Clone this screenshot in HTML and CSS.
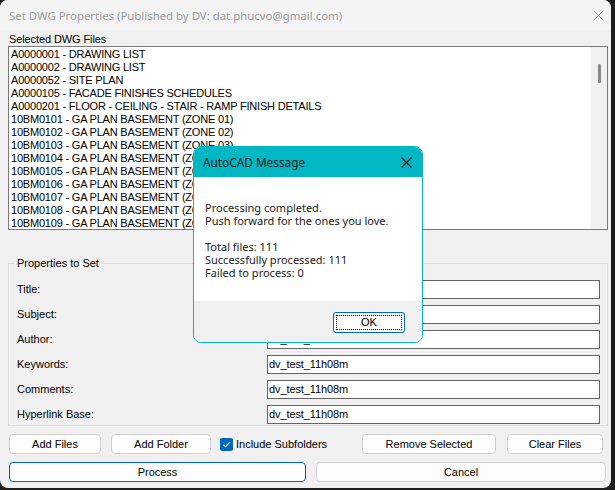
FILE: index.html
```html
<!DOCTYPE html>
<html>
<head>
<meta charset="utf-8">
<link rel="stylesheet" href="styles.css">
</head>
<body>
<div class="window">
  <div class="titlebar">
    <span class="title">Set DWG Properties (Published by DV: dat.phucvo@gmail.com)</span>
    <span class="close">
      <svg width="11" height="11" viewBox="0 0 11 11"><path d="M0.5 0.5 L10.5 10.5 M10.5 0.5 L0.5 10.5" stroke="#9a9a9a" stroke-width="1" fill="none"/></svg>
    </span>
  </div>
  <div class="client">
    <div class="label">Selected DWG Files</div>
    <div class="listbox">
      <div class="items">
        <div class="item">A0000001 - DRAWING LIST</div>
        <div class="item">A0000002 - DRAWING LIST</div>
        <div class="item">A0000052 - SITE PLAN</div>
        <div class="item">A0000105 - FACADE FINISHES SCHEDULES</div>
        <div class="item">A0000201 - FLOOR - CEILING - STAIR - RAMP FINISH DETAILS</div>
        <div class="item">10BM0101 - GA PLAN BASEMENT (ZONE 01)</div>
        <div class="item">10BM0102 - GA PLAN BASEMENT (ZONE 02)</div>
        <div class="item">10BM0103 - GA PLAN BASEMENT (ZONE 03)</div>
        <div class="item">10BM0104 - GA PLAN BASEMENT (ZONE 04)</div>
        <div class="item">10BM0105 - GA PLAN BASEMENT (ZONE 05)</div>
        <div class="item">10BM0106 - GA PLAN BASEMENT (ZONE 06)</div>
        <div class="item">10BM0107 - GA PLAN BASEMENT (ZONE 07)</div>
        <div class="item">10BM0108 - GA PLAN BASEMENT (ZONE 08)</div>
        <div class="item">10BM0109 - GA PLAN BASEMENT (ZONE 09)</div>
      </div>
      <div class="scrollbar"><div class="thumb"></div></div>
    </div>
    <fieldset class="group">
      <legend>Properties to Set</legend>
      <div class="props">
        <div class="plabel">Title:</div><div class="tbox">dv_test_11h08m</div>
        <div class="plabel">Subject:</div><div class="tbox">dv_test_11h08m</div>
        <div class="plabel">Author:</div><div class="tbox">dv_test_11h08m</div>
        <div class="plabel">Keywords:</div><div class="tbox">dv_test_11h08m</div>
        <div class="plabel">Comments:</div><div class="tbox">dv_test_11h08m</div>
        <div class="plabel">Hyperlink Base:</div><div class="tbox">dv_test_11h08m</div>
      </div>
    </fieldset>
    <div class="row row1">
      <div class="btn b-addfiles">Add Files</div>
      <div class="btn b-addfolder">Add Folder</div>
      <div class="check">
        <span class="box"><svg width="13" height="13" viewBox="0 0 13 13"><path d="M3.5 6.8 L5.6 8.8 L9.6 4.4" stroke="#fff" stroke-width="1.1" fill="none"/></svg></span>
        <span class="ctext">Include Subfolders</span>
      </div>
      <div class="btn b-remove">Remove Selected</div>
      <div class="btn b-clear">Clear Files</div>
    </div>
    <div class="row row2">
      <div class="btn b-process">Process</div>
      <div class="btn b-cancel">Cancel</div>
    </div>
  </div>

  <div class="dialog">
    <div class="dtitle">
      <span class="dtext">AutoCAD Message</span>
      <span class="dclose"><svg width="11" height="11" viewBox="0 0 11 11"><path d="M0.5 0.5 L10.5 10.5 M10.5 0.5 L0.5 10.5" stroke="#1a1a1a" stroke-width="1.1" fill="none"/></svg></span>
    </div>
    <div class="dbody">
      <div>Processing completed.</div>
      <div>Push forward for the ones you love.</div>
      <div class="blank"></div>
      <div>Total files: 111</div>
      <div>Successfully processed: 111</div>
      <div>Failed to process: 0</div>
    </div>
    <div class="dfoot">
      <div class="okbtn"><span class="focus">OK</span></div>
    </div>
  </div>
</div>
</body>
</html>
```

FILE: styles.css
```css
html, body {
  margin: 0;
  padding: 0;
  background: #1e1e1e;
}
body {
  width: 615px;
  height: 490px;
  overflow: hidden;
}
.window {
  position: relative;
  width: 611px;
  height: 488px;
  background: #f0f0f0;
  border-radius: 8px;
  overflow: hidden;
  font-family: "Liberation Sans", Arial, sans-serif;
  font-size: 11px;
  color: #000;
}
.titlebar {
  height: 30px;
  background: #f3f3f3;
  display: flex;
  align-items: center;
  padding-left: 9px;
}
.title {
  font-family: "Noto Sans", sans-serif;
  font-size: 11.4px;
  color: #9a9a9a;
  white-space: nowrap;
}
.close {
  margin-left: auto;
  width: 18px;
  height: 30px;
  display: flex;
  align-items: center;
  justify-content: flex-start;
}
.client {
  padding-left: 8px;
}
.label {
  height: 14px;
  line-height: 14px;
  margin-top: 2px;
  padding-left: 1px;
  letter-spacing: -0.1px;
}
.listbox {
  width: 598px;
  height: 182px;
  border: 1px solid #7a7a7a;
  background: #fff;
  display: flex;
  overflow: hidden;
}
.items {
  flex: 1;
  padding-left: 2px;
  padding-top: 1px;
  overflow: hidden;
}
.item {
  height: 13px;
  line-height: 13px;
  white-space: nowrap;
  letter-spacing: -0.2px;
}
.scrollbar {
  width: 16px;
  background: #f0f0f0;
  display: flex;
  justify-content: center;
  padding-top: 17px;
}
.thumb {
  width: 3px;
  height: 19px;
  background: #8a8a8a;
  border-radius: 1px;
  margin-left: 1px;
}
.group {
  margin: 27px 0 0 0;
  width: 583px;
  padding: 10px 7px 1px 8px;
  border: 1px solid #dcdcdc;
  min-width: 0;
}
.group legend {
  padding: 0 2px;
  margin-left: -2px;
  height: 13px;
  line-height: 13px;
}
.props {
  display: grid;
  grid-template-columns: 250px 333px;
  grid-auto-rows: 19px;
  row-gap: 6px;
}
.plabel {
  line-height: 19px;
  white-space: nowrap;
}
.tbox {
  border: 1px solid #646464;
  background: #fff;
  line-height: 17px;
  padding-left: 1px;
  white-space: nowrap;
  overflow: hidden;
  letter-spacing: -0.1px;
}
.row {
  display: flex;
  align-items: center;
  height: 20px;
  margin-top: 8px;
  padding-left: 1px;
}
.btn {
  box-sizing: border-box;
  flex-shrink: 0;
  height: 20px;
  line-height: 18px;
  text-align: center;
  background: #fdfdfd;
  border: 1px solid #d0d0d0;
  border-radius: 4px;
  white-space: nowrap;
}
.b-addfiles { width: 92px; }
.b-addfolder { width: 100px; margin-left: 10px; }
.check {
  display: flex;
  align-items: center;
  margin-left: 9px;
  flex-shrink: 0;
  white-space: nowrap;
  width: 132px;
}
.box {
  width: 13px;
  height: 13px;
  background: #0067c0;
  border-radius: 2px;
  display: flex;
}
.ctext {
  margin-left: 3px;
  font-size: 11px;
}
.b-remove { width: 134px; margin-left: 10px; }
.b-clear { width: 96px; margin-left: 11px; }
.b-process { width: 297px; border-color: #0067c0; }
.b-cancel { width: 290px; margin-left: 10px; }

.dialog {
  position: absolute;
  left: 193px;
  top: 146px;
  width: 228px;
  height: 195px;
  border: 1px solid #00b7c3;
  border-radius: 8px;
  overflow: hidden;
  background: #fff;
  display: flex;
  flex-direction: column;
  font-family: "Noto Sans", sans-serif;
  font-size: 11px;
  color: #1a1a1a;
}
.dtitle {
  height: 30px;
  background: #00b7c3;
  display: flex;
  align-items: center;
  padding-left: 9px;
}
.dtext {
  font-size: 11.8px;
  color: #1a1a1a;
}
.dclose {
  margin-left: auto;
  width: 21px;
  display: flex;
  align-items: center;
}
.dbody {
  height: 100px;
  padding: 24px 0 0 11px;
  line-height: 13px;
  white-space: nowrap;
}
.blank { height: 13px; }
.dfoot {
  flex: 1;
  background: #f0f0f0;
  display: flex;
  justify-content: flex-end;
  align-items: flex-start;
  padding: 11px 17px 0 0;
}
.okbtn {
  box-sizing: border-box;
  width: 72px;
  height: 21px;
  border: 1px solid #0067c0;
  border-radius: 3px;
  background: #fdfdfd;
  padding: 2px;
  display: flex;
}
.focus {
  flex: 1;
  border: 1px dotted #000;
  text-align: center;
  line-height: 13px;
  font-family: "Liberation Sans", Arial, sans-serif;
  font-size: 11px;
  color: #000;
}
```
